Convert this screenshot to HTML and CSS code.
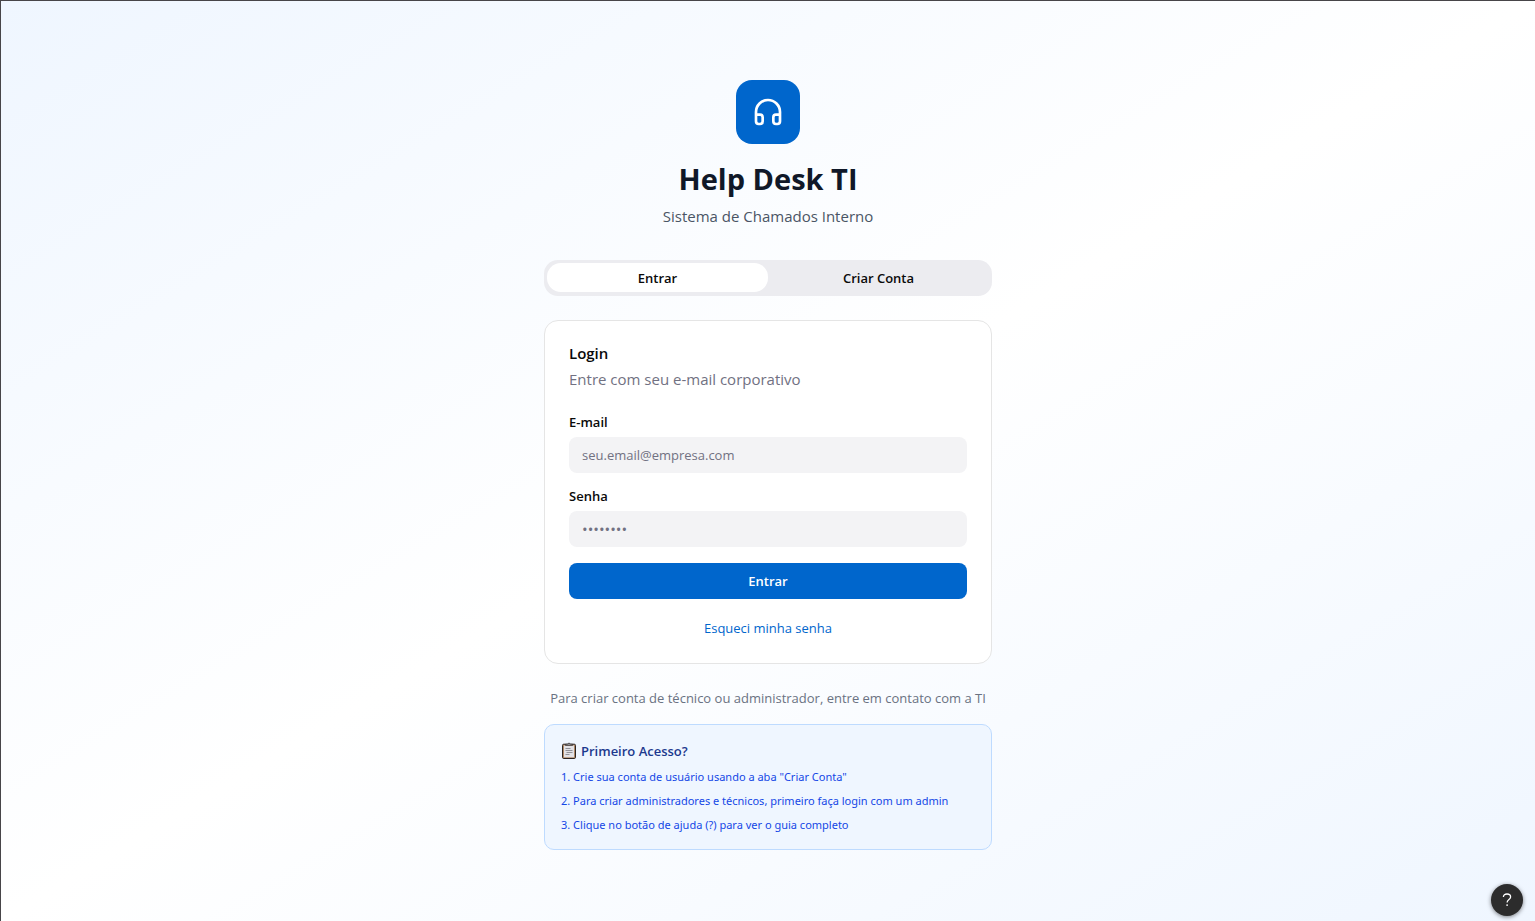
FILE: index.html
```
<!DOCTYPE html>
<html lang="pt-BR">
  <head>
    <meta charset="UTF-8" />
    <meta name="viewport" content="width=device-width, initial-scale=1.0" />
    <title>Help Desk TI</title>
    <link rel="stylesheet" href="styles.css">
  </head>
  <body>
    <main class="page">
      <div class="container">
        <header class="header">
          <div class="logo">
            <svg viewBox="0 0 24 24" width="32" height="32" fill="none" stroke="currentColor" stroke-width="2" stroke-linecap="round" stroke-linejoin="round" aria-hidden="true">
              <path d="M3 14h3a2 2 0 0 1 2 2v3a2 2 0 0 1-2 2H5a2 2 0 0 1-2-2v-7a9 9 0 0 1 18 0v7a2 2 0 0 1-2 2h-1a2 2 0 0 1-2-2v-3a2 2 0 0 1 2-2h3" />
            </svg>
          </div>
          <h1 class="title">Help Desk TI</h1>
          <p class="subtitle">Sistema de Chamados Interno</p>
        </header>

        <div class="tabs" role="tablist">
          <button class="tab active" type="button" role="tab" aria-selected="true">Entrar</button>
          <button class="tab" type="button" role="tab" aria-selected="false">Criar Conta</button>
        </div>

        <section class="card">
          <h2 class="card-title">Login</h2>
          <p class="card-description">Entre com seu e-mail corporativo</p>
          <form class="form">
            <div class="field">
              <label for="email">E-mail</label>
              <input type="email" id="email" placeholder="seu.email@empresa.com" />
            </div>
            <div class="field">
              <label for="password">Senha</label>
              <input type="password" id="password" placeholder="••••••••" />
            </div>
            <button class="submit" type="submit">Entrar</button>
            <a class="forgot" href="#">Esqueci minha senha</a>
          </form>
        </section>

        <p class="note">Para criar conta de técnico ou administrador, entre em contato com a TI</p>

        <section class="info">
          <h3 class="info-title">
            <svg class="clipboard" viewBox="0 0 16 18" width="16" height="18" aria-hidden="true">
              <rect x="1.5" y="2.2" width="13" height="14.3" rx="1.2" fill="#b08a68" stroke="#2b2523" />
              <rect x="3" y="3.5" width="10" height="11.8" fill="#e3e2e6" />
              <path d="M4.5 3.5V2.2h2a1.6 1.6 0 0 1 3 0h2v1.3z" fill="#8d8d92" stroke="#2b2523" stroke-width="0.6" />
              <path d="M4.5 6.5h5M4.5 8.5h7M5.5 10.5h6M4.5 12.5h4" stroke="#88888d" stroke-width="0.9" />
            </svg>
            Primeiro Acesso?
          </h3>
          <ol class="steps">
            <li>Crie sua conta de usuário usando a aba "Criar Conta"</li>
            <li>Para criar administradores e técnicos, primeiro faça login com um admin</li>
            <li>Clique no botão de ajuda (?) para ver o guia completo</li>
          </ol>
        </section>
      </div>
    </main>

    <button class="help" type="button" aria-label="Ajuda">
      <svg viewBox="0 0 16 16" width="16" height="16" fill="none" stroke="currentColor" stroke-width="1.3" aria-hidden="true">
        <path d="M4.4 5.1C4.4 3.1 5.9 2 8 2s3.6 1.2 3.6 3c0 2.5-3.5 2.5-3.5 5.4" />
        <circle cx="8.1" cy="13.1" r="0.9" fill="currentColor" stroke="none" />
      </svg>
    </button>
  </body>
</html>
```
FILE: styles.css
```
* {
  box-sizing: border-box;
}

body {
  margin: 0;
  font-family: "Open Sans", "Noto Sans", sans-serif;
  font-size: 15px;
  color: #0a0a0a;
}

h1,
h2,
h3,
p,
ol {
  margin: 0;
}

button,
input {
  font-family: inherit;
  border: none;
}

button {
  cursor: pointer;
}

.page {
  min-height: 100vh;
  display: flex;
  justify-content: center;
  padding: 79px 16px 70px;
  border-top: 1px solid #474549;
  border-left: 1px solid #474549;
  background: linear-gradient(to bottom right, #eff6ff, #ffffff, #eff6ff);
}

.container {
  width: 100%;
  max-width: 448px;
}

.header {
  display: flex;
  flex-direction: column;
  align-items: center;
  margin-bottom: 32px;
}

.logo {
  display: flex;
  align-items: center;
  justify-content: center;
  width: 64px;
  height: 64px;
  margin-bottom: 16px;
  border-radius: 16px;
  background-color: #0066cc;
  color: #ffffff;
}

.title {
  margin-bottom: 6px;
  font-size: 29px;
  line-height: 38px;
  font-weight: 700;
  color: #101828;
}

.subtitle {
  line-height: 24px;
  color: #4a5565;
}

.tabs {
  display: flex;
  height: 36px;
  margin-bottom: 24px;
  padding: 3px 3px 4px;
  border-radius: 14px;
  background-color: #ececf0;
}

.tab {
  flex: 1;
  padding: 0;
  border-radius: 14px;
  background: none;
  font-size: 13px;
  font-weight: 600;
  color: #0a0a0a;
}

.tab.active {
  background-color: #ffffff;
}

.card {
  padding: 24px;
  border: 1px solid #e5e5e5;
  border-radius: 14px;
  background-color: #ffffff;
}

.card-title {
  margin-bottom: 6px;
  font-size: 15px;
  line-height: 16px;
  font-weight: 600;
}

.card-description {
  margin-bottom: 24px;
  line-height: 24px;
  color: #717182;
}

.form {
  display: flex;
  flex-direction: column;
  gap: 16px;
}

.field {
  display: flex;
  flex-direction: column;
  gap: 8px;
}

.field label {
  font-size: 13px;
  line-height: 14px;
  font-weight: 600;
}

.field input {
  height: 36px;
  padding: 4px 13px;
  border-radius: 8px;
  background-color: #f3f3f5;
  font-size: 13px;
}

.field input::placeholder {
  color: #717182;
}

.field input[type="password"] {
  font-size: 15px;
}

.submit {
  height: 36px;
  border-radius: 8px;
  background-color: #0066cc;
  font-size: 13px;
  font-weight: 600;
  color: #ffffff;
}

.forgot {
  align-self: center;
  padding-top: 2px;
  font-size: 13px;
  line-height: 22px;
  color: #0066cc;
  text-decoration: none;
}

.forgot:hover {
  text-decoration: underline;
}

.note {
  margin: 24px 0 16px;
  font-size: 13px;
  line-height: 20px;
  text-align: center;
  color: #6a7282;
}

.info {
  padding: 16px;
  border: 1px solid #bedbff;
  border-radius: 10px;
  background-color: #eff6ff;
}

.info-title {
  display: flex;
  align-items: center;
  gap: 4px;
  margin-bottom: 8px;
  font-size: 13px;
  line-height: 20px;
  font-weight: 600;
  color: #1c398e;
}

.steps {
  display: flex;
  flex-direction: column;
  gap: 8px;
  padding: 0;
  list-style-position: inside;
  list-style-type: decimal;
  font-family: "Noto Sans", "Open Sans", sans-serif;
  font-size: 11px;
  line-height: 16px;
  color: #1447e6;
}

.help {
  position: fixed;
  right: 12px;
  bottom: 5px;
  display: flex;
  align-items: center;
  justify-content: center;
  width: 32px;
  height: 32px;
  padding: 0;
  border-radius: 50%;
  background-color: #2c2c2c;
  color: #ffffff;
  box-shadow: 0 1px 4px rgba(0, 0, 0, 0.5);
}
```
